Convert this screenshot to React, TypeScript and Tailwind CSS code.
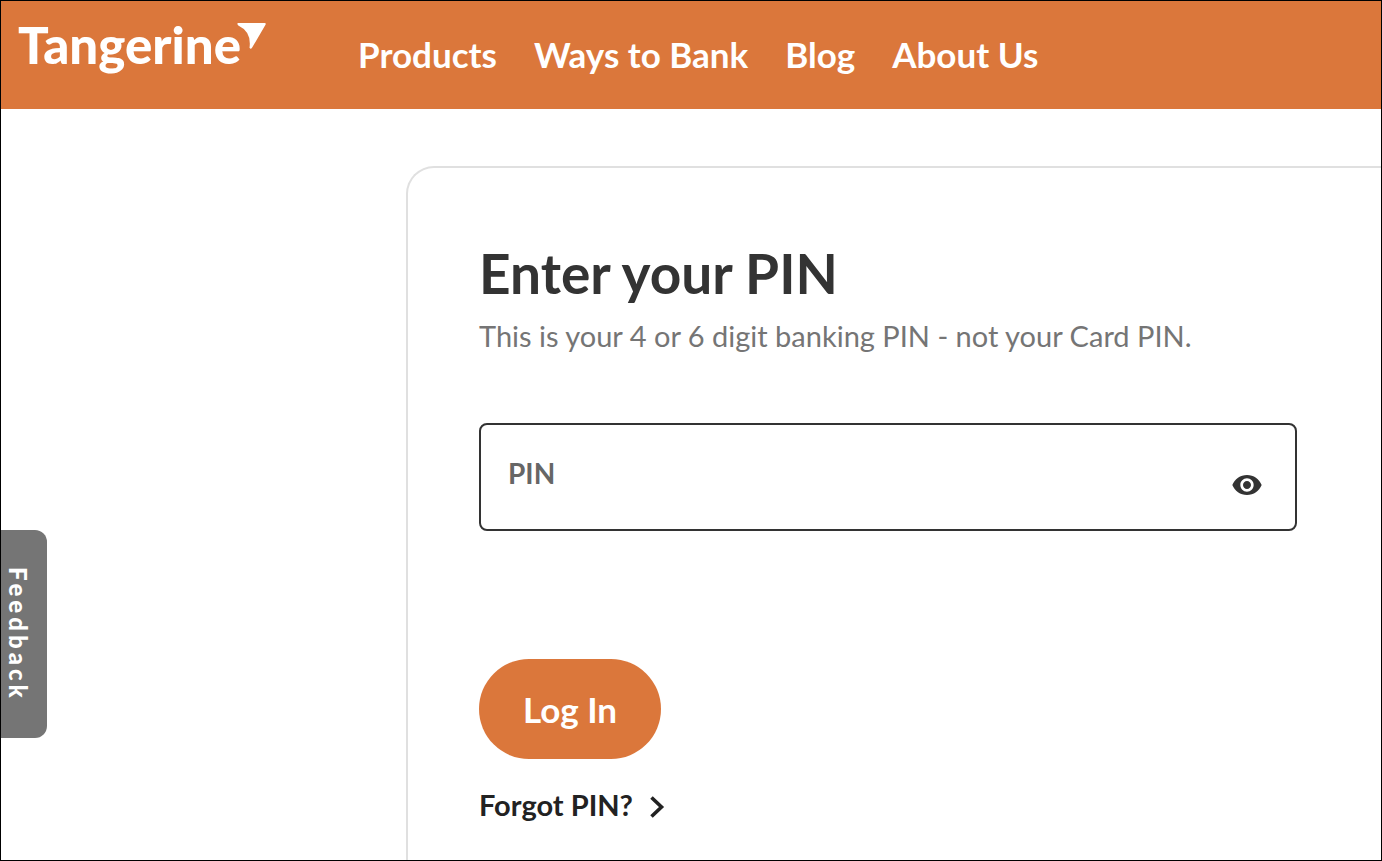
import { useState } from "react";

const navLinks = ["Products", "Ways to Bank", "Blog", "About Us"];

function Logo() {
  return (
    <a href="#home" className="flex w-[340px] shrink-0 items-start text-white">
      <span className="text-[51px] leading-[52px] font-black">Tangerine</span>
      <svg width="30" height="27" viewBox="0 0 30 27" className="-ml-1 mt-1" fill="currentColor" aria-hidden="true">
        <path d="M1.2 0H27.6Q29.4 .1 28.5 1.7L15 24.8Q13.7 26.6 12.500 24.800Q14.800 9 1.300 2.500Q-.6 .5 1.200 0Z" />
      </svg>
    </a>
  );
}

function Header() {
  return (
    <header className="flex h-[108px] items-start bg-[#db773b] px-[17px] pt-[18px]">
      <Logo />
      <nav className="flex gap-[37px] pt-[15px]">
        {navLinks.map((link) => (
          <a
            key={link}
            href="#nav"
            className="text-[35px] leading-10 font-bold whitespace-nowrap text-white"
          >
            {link}
          </a>
        ))}
      </nav>
    </header>
  );
}

function PinForm() {
  const [pin, setPin] = useState("");
  const [visible, setVisible] = useState(false);

  return (
    <form className="flex flex-col items-start" onSubmit={(e) => e.preventDefault()}>
      <h1 className="text-[55px] leading-[62px] font-bold text-[#333333]">
        Enter your PIN
      </h1>
      <p className="mt-3.5 text-[29px] leading-9 text-[#757575]">
        This is your 4 or 6 digit banking PIN - not your Card PIN.
      </p>

      {/* PIN field */}
      <div className="mt-[69px] flex h-[108px] w-full items-start rounded-lg border-2 border-[#333333] pr-8 pl-[27px]">
        <label htmlFor="pin" className="pt-[30px] text-[28px] leading-9 font-bold text-[#666666]">
          PIN
        </label>
        <input
          id="pin"
          type={visible ? "text" : "password"}
          value={pin}
          onChange={(e) => setPin(e.target.value)}
          className="h-full min-w-0 flex-1 px-4 text-[28px] text-[#333333] outline-none"
        />
        <button
          type="button"
          aria-label="Show PIN"
          onClick={() => setVisible(!visible)}
          className="mt-11 text-[#333333]"
        >
          <svg width="32" height="32" viewBox="0 0 24 24" fill="currentColor" aria-hidden="true">
            <path d="M12 4.500C7 4.500 2.730 7.610 1 12c1.730 4.390 6 7.500 11 7.500s9.270-3.110 11-7.500c-1.730-4.390-6-7.500-11-7.500zM12 17c-2.760 0-5-2.240-5-5s2.240-5 5-5 5 2.240 5 5-2.240 5-5 5zm0-8c-1.660 0-3 1.340-3 3s1.340 3 3 3 3-1.340 3-3-1.340-3-3-3z" />
          </svg>
        </button>
      </div>

      <button
        type="submit"
        className="mt-32 h-[100px] rounded-full bg-[#db773b] px-11 text-[35px] leading-10 font-bold text-white"
      >
        Log In
      </button>
      <a
        href="#forgot"
        className="mt-[26px] flex items-center gap-4 text-[29px] leading-10 font-bold text-[#222222]"
      >
        Forgot PIN?
        <svg width="16" height="24" viewBox="0 0 16 24" fill="none" stroke="currentColor" strokeWidth="3.600" className="mt-1" aria-hidden="true">
          <path d="M2.500 2.500L12.500 12L2.500 21.500" />
        </svg>
      </a>
    </form>
  );
}

export default function App() {
  return (
    <div className="relative flex min-h-screen flex-col overflow-hidden border border-black bg-white font-['Lato',sans-serif]">
      <Header />
      <main className="flex flex-1 pt-[57px] pl-[405px]">
        <section className="flex-1 rounded-tl-[28px] border-t-2 border-l-2 border-[#e0e0e0] pt-[74px] pr-[84px] pb-7 pl-[71px]">
          <PinForm />
        </section>
      </main>
      <button
        type="button"
        className="absolute top-[529px] left-0 flex h-[208px] w-[46px] items-center justify-center rounded-r-xl bg-[#757575] pr-3 text-2xl font-black tracking-[4px] text-white [writing-mode:vertical-rl]"
      >
        Feedback
      </button>
    </div>
  );
}
